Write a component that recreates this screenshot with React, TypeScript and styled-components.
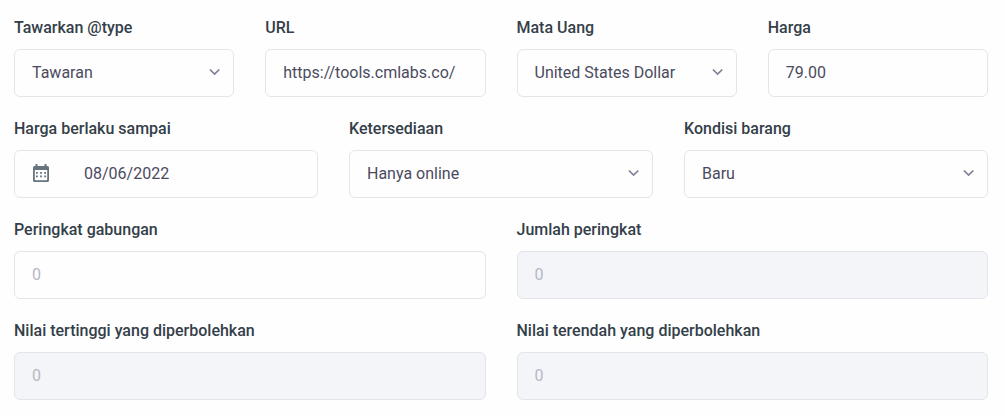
import React, { useId, useState } from 'react';
import styled, { createGlobalStyle, css } from 'styled-components';

const GlobalStyle = createGlobalStyle`
  *, *::before, *::after {
    box-sizing: border-box;
  }
  body {
    margin: 0;
    background: #fefefe;
    font-family: Roboto, 'Liberation Sans', sans-serif;
    font-size: 16px;
    color: #4b4b5f;
  }
`;

const Form = styled.form`
  display: flex;
  flex-direction: column;
  gap: 20px;
  padding: 16px 17px 16px 14px;
`;

const Row = styled.div<{ $columns: number }>`
  display: grid;
  grid-template-columns: repeat(${(p) => p.$columns}, minmax(0, 1fr));
  column-gap: 31px;
`;

const FieldBox = styled.div`
  display: flex;
  flex-direction: column;
  gap: 9px;
`;

const Label = styled.label`
  font-weight: 500;
  line-height: 24px;
  color: #343f49;
`;

const control = css`
  width: 100%;
  height: 48px;
  margin: 0;
  padding: 0 17px 2px;
  border: 1px solid #e4e5eb;
  border-radius: 6px;
  background: #fefefe;
  font: inherit;
  color: inherit;
  outline: none;

  &:focus-visible {
    border-color: #9aa3b5;
  }
`;

const Input = styled.input`
  ${control}

  &::placeholder {
    color: #b7b8c4;
    opacity: 1;
  }
  &:disabled {
    background: #f3f5f9;
  }
`;

const SelectShell = styled.div`
  display: grid;
  align-items: center;

  & > * {
    grid-area: 1 / 1;
  }
`;

const Select = styled.select`
  ${control}
  padding-right: 40px;
  appearance: none;
`;

const Chevron = styled.svg`
  justify-self: end;
  margin: 0 13px 2px 0;
  pointer-events: none;
`;

const DateShell = styled.div`
  ${control}
  display: flex;
  align-items: center;
  gap: 35px;
  padding-left: 18px;

  &:focus-within {
    border-color: #9aa3b5;
  }
`;

const DateInput = styled.input`
  flex: 1;
  min-width: 0;
  padding: 0;
  border: 0;
  background: none;
  font: inherit;
  color: inherit;
  outline: none;
`;

const CalendarIcon = () => (
  <svg width="16" height="18" viewBox="0 0 16 18" fill="#66757d" aria-hidden="true">
    <path
      fillRule="evenodd"
      d="M2.500 0h2v2h7V0h2v2h.9A1.600 1.600 0 0 1 16 3.600v12.800a1.600 1.600 0 0 1-1.600 1.600H1.600A1.600 1.600 0 0 1 0 16.400V3.600A1.600 1.600 0 0 1 1.600 2h.9zM1.800 6v9.400a.8.8 0 0 0 .8.8h10.800a.8.8 0 0 0 .8-.8V6z"
    />
    <path d="M3 8h1.800v1.800H3zM7.100 8h1.800v1.800H7.100zM11.200 8H13v1.800h-1.800zM3 11.500h1.800v1.800H3zM7.100 11.500h1.800v1.800H7.100zM11.200 11.500H13v1.800h-1.800z" />
  </svg>
);

type TextFieldProps = {
  label: string;
  value?: string;
  placeholder?: string;
  disabled?: boolean;
};

function TextField({ label, value = '', placeholder, disabled }: TextFieldProps) {
  const id = useId();
  return (
    <FieldBox>
      <Label htmlFor={id}>{label}</Label>
      <Input id={id} type="text" defaultValue={value} placeholder={placeholder} disabled={disabled} />
    </FieldBox>
  );
}

function SelectField({ label, options }: { label: string; options: string[] }) {
  const id = useId();
  const [value, setValue] = useState(options[0]);
  return (
    <FieldBox>
      <Label htmlFor={id}>{label}</Label>
      <SelectShell>
        <Select id={id} value={value} onChange={(e) => setValue(e.target.value)}>
          {options.map((option) => (
            <option key={option}>{option}</option>
          ))}
        </Select>
        <Chevron width="12" height="8" viewBox="0 0 12 8" fill="none" aria-hidden="true">
          <path d="M.9 1.500 5.600 6.100l4.700-4.600" stroke="#807f94" strokeWidth="1.700" />
        </Chevron>
      </SelectShell>
    </FieldBox>
  );
}

function DateField({ label, value }: { label: string; value: string }) {
  const id = useId();
  return (
    <FieldBox>
      <Label htmlFor={id}>{label}</Label>
      <DateShell>
        <CalendarIcon />
        <DateInput id={id} type="text" defaultValue={value} />
      </DateShell>
    </FieldBox>
  );
}

export default function App() {
  return (
    <>
      <GlobalStyle />
      <Form>
        <Row $columns={4}>
          <SelectField label="Tawarkan @type" options={['Tawaran']} />
          <TextField label="URL" value="https://tools.cmlabs.co/" />
          <SelectField label="Mata Uang" options={['United States Dollar']} />
          <TextField label="Harga" value="79.00" />
        </Row>
        <Row $columns={3}>
          <DateField label="Harga berlaku sampai" value="08/06/2022" />
          <SelectField label="Ketersediaan" options={['Hanya online']} />
          <SelectField label="Kondisi barang" options={['Baru']} />
        </Row>
        <Row $columns={2}>
          <TextField label="Peringkat gabungan" placeholder="0" />
          <TextField label="Jumlah peringkat" placeholder="0" disabled />
        </Row>
        <Row $columns={2}>
          <TextField label="Nilai tertinggi yang diperbolehkan" placeholder="0" disabled />
          <TextField label="Nilai terendah yang diperbolehkan" placeholder="0" disabled />
        </Row>
      </Form>
    </>
  );
}
